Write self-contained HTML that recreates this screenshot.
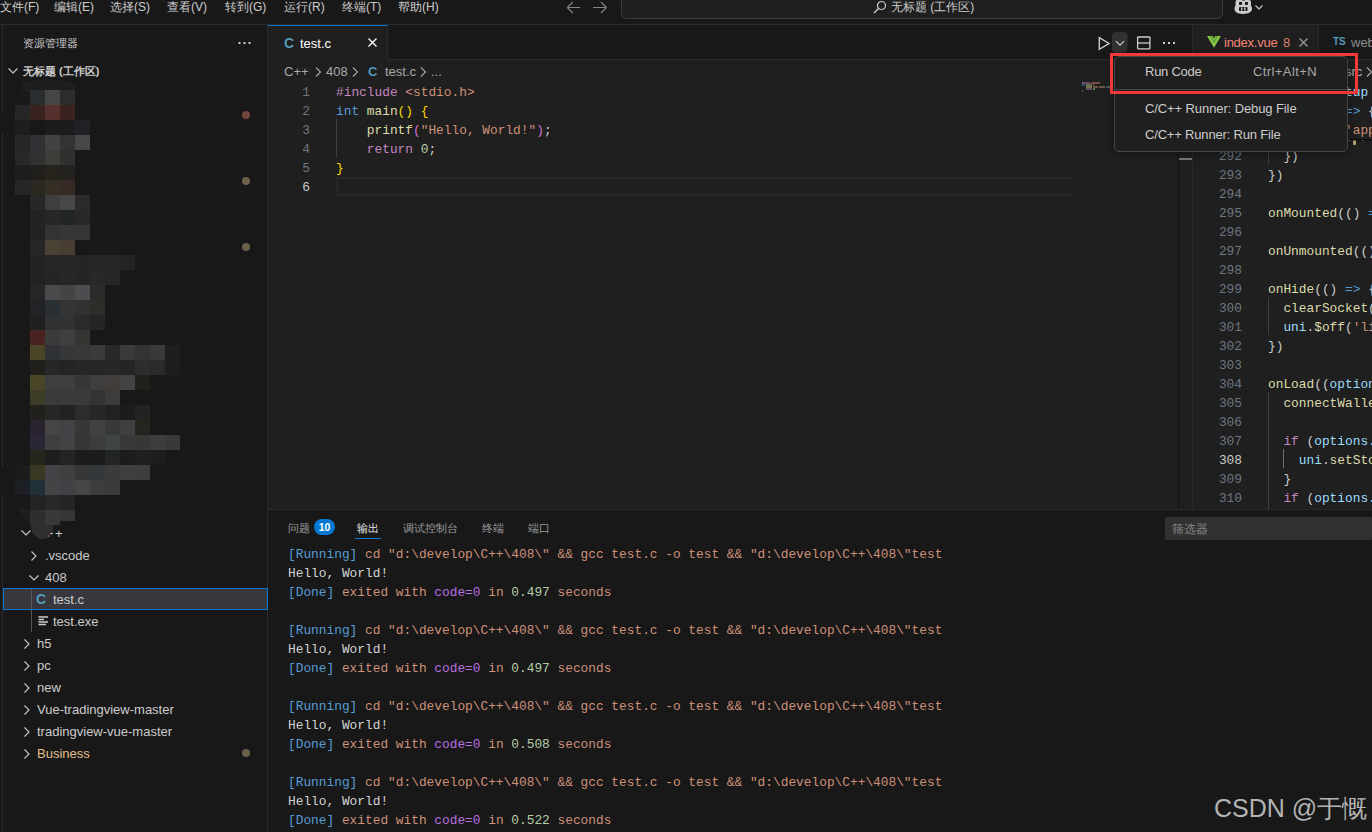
<!DOCTYPE html>
<html><head><meta charset="utf-8">
<style>
*{margin:0;padding:0;box-sizing:border-box}
html,body{width:1372px;height:832px;overflow:hidden;background:#181818}
body{position:relative;font-family:"Liberation Sans",sans-serif;color:#cccccc;font-size:13px}
.a{position:absolute;white-space:pre}
.m{font-family:"Liberation Mono",monospace;font-size:12.83px;line-height:19px}
.ui{font-size:12px;line-height:15px}
.tr{font-size:13px;line-height:22px}
.kw{color:#c586c0}.pu{color:#b670e0}.st{color:#ce9178}.ty{color:#569cd6}.fn{color:#dcdcaa}.b1{color:#ffd700}.b2{color:#da70d6}.nu{color:#b5cea8}.va{color:#9cdcfe}.pl{color:#cccccc}
.ln{color:#6e7681;text-align:right}
svg{position:absolute;overflow:visible}
</style></head><body>

<!-- ===== title bar ===== -->
<div class="a" style="left:0;top:0;width:1372px;height:25px;background:#181818;border-bottom:1px solid #2b2b2b"></div>
<div class="a ui" style="left:0;top:0">文件(F)</div>
<div class="a ui" style="left:54px;top:0">编辑(E)</div>
<div class="a ui" style="left:110px;top:0">选择(S)</div>
<div class="a ui" style="left:167px;top:0">查看(V)</div>
<div class="a ui" style="left:225px;top:0">转到(G)</div>
<div class="a ui" style="left:284px;top:0">运行(R)</div>
<div class="a ui" style="left:342px;top:0">终端(T)</div>
<div class="a ui" style="left:398px;top:0">帮助(H)</div>
<svg style="left:566px;top:0" width="44" height="16" viewBox="0 0 44 16">
 <path d="M1.3 7.5h13M1.3 7.5l5.5-5.5M1.3 7.5l5.5 5.5" stroke="#858585" stroke-width="1.1" fill="none"/>
 <path d="M40.5 7.5h-13.5M40.5 7.5l-5.5-5.5M40.5 7.5l-5.5 5.5" stroke="#858585" stroke-width="1.1" fill="none"/>
</svg>
<div class="a" style="left:621px;top:-12px;width:602px;height:31px;border:1px solid #3c3c3c;border-radius:6px;background:#1f1f1f"></div>
<svg style="left:872px;top:0" width="16" height="16" viewBox="0 0 16 16">
 <circle cx="9.5" cy="5.5" r="4" stroke="#cccccc" stroke-width="1.2" fill="none"/>
 <path d="M6.7 8.3L2 13" stroke="#cccccc" stroke-width="1.3"/>
</svg>
<div class="a ui" style="left:891px;top:0">无标题 (工作区)</div>
<svg style="left:1234px;top:0" width="32" height="16" viewBox="0 0 32 16">
 <path d="M3 0h12a2 2 0 0 1 2 2v3.5c0.6 0.8 1 2 1 3.3 0 3.3-3.5 5.2-9 5.2S0.5 12.1 0.5 8.8c0-1.3 0.4-2.5 1-3.3V2a2 2 0 0 1 1.5-2z" fill="#cccccc"/>
 <rect x="5" y="2" width="3" height="2.8" fill="#181818"/><rect x="11" y="2" width="3" height="2.8" fill="#181818"/><path d="M8 -1h3v1.5h-3z" fill="#181818"/>
 <rect x="5" y="7" width="8.5" height="4" rx="1" fill="#181818"/>
 <rect x="7" y="7.4" width="1.4" height="3.2" fill="#cccccc"/><rect x="10.1" y="7.4" width="1.4" height="3.2" fill="#cccccc"/>
 <path d="M21.5 5.5l3.5 3.5 3.5-3.5" stroke="#cccccc" stroke-width="1.1" fill="none"/>
</svg>

<!-- ===== sidebar ===== -->
<div class="a" style="left:0;top:25px;width:268px;height:807px;background:#181818;border-right:1px solid #2b2b2b"></div>
<div class="a" style="left:2px;top:25px;width:1px;height:86px;background:#2b2b2b"></div><div class="a" style="left:2px;top:133px;width:1px;height:334px;background:#2b2b2b"></div><div class="a" style="left:2px;top:494px;width:1px;height:338px;background:#2b2b2b"></div>
<div class="a" style="left:23px;top:35px;font-size:11px;line-height:16px">资源管理器</div>
<svg style="left:238px;top:42px" width="14" height="3" viewBox="0 0 14 3"><rect x="0.5" y="0" width="2" height="2" fill="#cccccc"/><rect x="5.5" y="0" width="2" height="2" fill="#cccccc"/><rect x="10.5" y="0" width="2" height="2" fill="#cccccc"/></svg>
<svg style="left:7px;top:66px" width="12" height="10" viewBox="0 0 12 10"><path d="M1.5 2.5l4.5 4.5 4.5-4.5" stroke="#cccccc" stroke-width="1.1" fill="none"/></svg>
<div class="a" style="left:23px;top:63px;font-size:11px;line-height:16px;font-weight:bold">无标题 (工作区)</div>
<svg style="left:0;top:0" width="268" height="832">
 <path d="M22 84 Q30 78 60 80 L75 84 L75 90 L22 92z" fill="#1e1e1e"/>
 <rect x="53" y="510" width="22" height="11" fill="#353535"/>
 <path d="M31 525 L53 525 L53 534 Q50 539 40 539 Q34 536 32 532z" fill="#2f2f31"/>
 <path d="M20 506 L30 510 L30 525 Q24 518 20 512z" fill="#1e1e1e"/>
 <rect x="30" y="90" width="15" height="15" fill="#2a2d30"/><rect x="45" y="90" width="15" height="15" fill="#464644"/><rect x="60" y="90" width="15" height="15" fill="#2c2c2a"/><rect x="15" y="105" width="15" height="15" fill="#262626"/><rect x="30" y="105" width="15" height="15" fill="#3a2220"/><rect x="45" y="105" width="15" height="15" fill="#55302c"/><rect x="60" y="105" width="15" height="15" fill="#3a2220"/><rect x="15" y="120" width="15" height="15" fill="#1e1e1e"/><rect x="30" y="120" width="15" height="15" fill="#181818"/><rect x="45" y="120" width="15" height="15" fill="#1c1c1c"/><rect x="60" y="120" width="15" height="15" fill="#1c1c1c"/><rect x="75" y="120" width="15" height="15" fill="#1f2124"/><rect x="15" y="135" width="15" height="15" fill="#262626"/><rect x="30" y="135" width="15" height="15" fill="#2f3134"/><rect x="45" y="135" width="15" height="15" fill="#434240"/><rect x="60" y="135" width="15" height="15" fill="#333333"/><rect x="75" y="135" width="15" height="15" fill="#47474a"/><rect x="15" y="150" width="15" height="15" fill="#282828"/><rect x="30" y="150" width="15" height="15" fill="#313131"/><rect x="45" y="150" width="15" height="15" fill="#3c3d38"/><rect x="60" y="150" width="15" height="15" fill="#30302e"/><rect x="15" y="165" width="15" height="15" fill="#1d1d1d"/><rect x="30" y="165" width="15" height="15" fill="#201f1c"/><rect x="45" y="165" width="15" height="15" fill="#26231d"/><rect x="60" y="165" width="15" height="15" fill="#24221e"/><rect x="15" y="180" width="15" height="15" fill="#262626"/><rect x="30" y="180" width="15" height="15" fill="#2b2822"/><rect x="45" y="180" width="15" height="15" fill="#352e25"/><rect x="60" y="180" width="15" height="15" fill="#352a25"/><rect x="30" y="195" width="15" height="15" fill="#272727"/><rect x="45" y="195" width="15" height="15" fill="#3e3e3d"/><rect x="60" y="195" width="15" height="15" fill="#474747"/><rect x="75" y="195" width="15" height="15" fill="#2b2a28"/><rect x="30" y="210" width="15" height="15" fill="#222222"/><rect x="45" y="210" width="15" height="15" fill="#252625"/><rect x="60" y="210" width="15" height="15" fill="#222526"/><rect x="75" y="210" width="15" height="15" fill="#292727"/><rect x="30" y="225" width="15" height="15" fill="#222222"/><rect x="45" y="225" width="15" height="15" fill="#333333"/><rect x="60" y="225" width="15" height="15" fill="#363636"/><rect x="75" y="225" width="15" height="15" fill="#353535"/><rect x="30" y="240" width="15" height="15" fill="#262626"/><rect x="45" y="240" width="15" height="15" fill="#4a4334"/><rect x="60" y="240" width="15" height="15" fill="#473d30"/><rect x="30" y="255" width="15" height="15" fill="#222222"/><rect x="45" y="255" width="15" height="15" fill="#262626"/><rect x="60" y="255" width="15" height="15" fill="#262626"/><rect x="75" y="255" width="15" height="15" fill="#232526"/><rect x="90" y="255" width="15" height="15" fill="#252628"/><rect x="105" y="255" width="15" height="15" fill="#262626"/><rect x="120" y="255" width="15" height="15" fill="#242424"/><rect x="30" y="270" width="15" height="15" fill="#222222"/><rect x="45" y="270" width="15" height="15" fill="#252525"/><rect x="60" y="270" width="15" height="15" fill="#262826"/><rect x="75" y="270" width="15" height="15" fill="#252525"/><rect x="90" y="270" width="15" height="15" fill="#282828"/><rect x="105" y="270" width="15" height="15" fill="#262626"/><rect x="30" y="285" width="15" height="15" fill="#262626"/><rect x="45" y="285" width="15" height="15" fill="#4a4a4c"/><rect x="60" y="285" width="15" height="15" fill="#444442"/><rect x="75" y="285" width="15" height="15" fill="#4d4c50"/><rect x="90" y="285" width="15" height="15" fill="#2c2b29"/><rect x="30" y="300" width="15" height="15" fill="#212326"/><rect x="45" y="300" width="15" height="15" fill="#2a2f33"/><rect x="60" y="300" width="15" height="15" fill="#353434"/><rect x="75" y="300" width="15" height="15" fill="#333232"/><rect x="90" y="300" width="15" height="15" fill="#2d2c29"/><rect x="30" y="315" width="15" height="15" fill="#1e2120"/><rect x="45" y="315" width="15" height="15" fill="#2f3133"/><rect x="60" y="315" width="15" height="15" fill="#313233"/><rect x="75" y="315" width="15" height="15" fill="#2b2b29"/><rect x="90" y="315" width="15" height="15" fill="#262425"/><rect x="30" y="330" width="15" height="15" fill="#4a2222"/><rect x="45" y="330" width="15" height="15" fill="#3b3b3a"/><rect x="60" y="330" width="15" height="15" fill="#403f42"/><rect x="75" y="330" width="15" height="15" fill="#353431"/><rect x="30" y="345" width="15" height="15" fill="#4a4527"/><rect x="45" y="345" width="15" height="15" fill="#303335"/><rect x="60" y="345" width="15" height="15" fill="#353738"/><rect x="75" y="345" width="15" height="15" fill="#383838"/><rect x="90" y="345" width="15" height="15" fill="#3b3b3b"/><rect x="105" y="345" width="15" height="15" fill="#292927"/><rect x="120" y="345" width="15" height="15" fill="#3a393b"/><rect x="135" y="345" width="15" height="15" fill="#313335"/><rect x="150" y="345" width="15" height="15" fill="#3a3937"/><rect x="165" y="345" width="15" height="15" fill="#1e1f1d"/><rect x="30" y="360" width="15" height="15" fill="#211f1b"/><rect x="45" y="360" width="15" height="15" fill="#272727"/><rect x="60" y="360" width="15" height="15" fill="#232524"/><rect x="75" y="360" width="15" height="15" fill="#262626"/><rect x="90" y="360" width="15" height="15" fill="#262626"/><rect x="105" y="360" width="15" height="15" fill="#272727"/><rect x="120" y="360" width="15" height="15" fill="#252525"/><rect x="135" y="360" width="15" height="15" fill="#2b2e2d"/><rect x="150" y="360" width="15" height="15" fill="#2a2a2a"/><rect x="165" y="360" width="15" height="15" fill="#1d1d1d"/><rect x="30" y="375" width="15" height="15" fill="#4a4628"/><rect x="45" y="375" width="15" height="15" fill="#3e3e3e"/><rect x="60" y="375" width="15" height="15" fill="#3d3f3e"/><rect x="75" y="375" width="15" height="15" fill="#373538"/><rect x="90" y="375" width="15" height="15" fill="#3e3e3e"/><rect x="105" y="375" width="15" height="15" fill="#403d3b"/><rect x="120" y="375" width="15" height="15" fill="#434245"/><rect x="135" y="375" width="15" height="15" fill="#22201d"/><rect x="30" y="390" width="15" height="15" fill="#3d3c26"/><rect x="45" y="390" width="15" height="15" fill="#393a3b"/><rect x="60" y="390" width="15" height="15" fill="#3b3b39"/><rect x="75" y="390" width="15" height="15" fill="#3a3a3a"/><rect x="90" y="390" width="15" height="15" fill="#333333"/><rect x="105" y="390" width="15" height="15" fill="#3e3b3c"/><rect x="30" y="405" width="15" height="15" fill="#22201d"/><rect x="45" y="405" width="15" height="15" fill="#272727"/><rect x="60" y="405" width="15" height="15" fill="#222222"/><rect x="75" y="405" width="15" height="15" fill="#2c2c2c"/><rect x="90" y="405" width="15" height="15" fill="#272727"/><rect x="105" y="405" width="15" height="15" fill="#222222"/><rect x="120" y="405" width="15" height="15" fill="#1c1c1c"/><rect x="135" y="405" width="15" height="15" fill="#222222"/><rect x="30" y="420" width="15" height="15" fill="#28232e"/><rect x="45" y="420" width="15" height="15" fill="#454545"/><rect x="60" y="420" width="15" height="15" fill="#434246"/><rect x="75" y="420" width="15" height="15" fill="#373738"/><rect x="90" y="420" width="15" height="15" fill="#414141"/><rect x="105" y="420" width="15" height="15" fill="#393939"/><rect x="120" y="420" width="15" height="15" fill="#403e3f"/><rect x="135" y="420" width="15" height="15" fill="#252520"/><rect x="30" y="435" width="15" height="15" fill="#2a2633"/><rect x="45" y="435" width="15" height="15" fill="#3f3e41"/><rect x="60" y="435" width="15" height="15" fill="#434245"/><rect x="75" y="435" width="15" height="15" fill="#363636"/><rect x="90" y="435" width="15" height="15" fill="#3d3c3a"/><rect x="105" y="435" width="15" height="15" fill="#3f4444"/><rect x="120" y="435" width="15" height="15" fill="#393937"/><rect x="135" y="435" width="15" height="15" fill="#373737"/><rect x="150" y="435" width="15" height="15" fill="#3e3d3b"/><rect x="165" y="435" width="15" height="15" fill="#383838"/><rect x="30" y="450" width="15" height="15" fill="#27261d"/><rect x="45" y="450" width="15" height="15" fill="#1e1e1e"/><rect x="60" y="450" width="15" height="15" fill="#222524"/><rect x="75" y="450" width="15" height="15" fill="#1c1c1c"/><rect x="90" y="450" width="15" height="15" fill="#1c1c1c"/><rect x="105" y="450" width="15" height="15" fill="#222524"/><rect x="120" y="450" width="15" height="15" fill="#1c1c1c"/><rect x="135" y="450" width="15" height="15" fill="#1f1f1f"/><rect x="150" y="450" width="15" height="15" fill="#1e1d1b"/><rect x="15" y="465" width="15" height="15" fill="#1c1c1c"/><rect x="30" y="465" width="15" height="15" fill="#3a3822"/><rect x="45" y="465" width="15" height="15" fill="#434246"/><rect x="60" y="465" width="15" height="15" fill="#3e3f3f"/><rect x="75" y="465" width="15" height="15" fill="#373634"/><rect x="90" y="465" width="15" height="15" fill="#33383b"/><rect x="105" y="465" width="15" height="15" fill="#3c3b39"/><rect x="120" y="465" width="15" height="15" fill="#3f3d3e"/><rect x="135" y="465" width="15" height="15" fill="#3e3c3d"/><rect x="15" y="480" width="15" height="15" fill="#1c2025"/><rect x="30" y="480" width="15" height="15" fill="#1f3039"/><rect x="45" y="480" width="15" height="15" fill="#444346"/><rect x="60" y="480" width="15" height="15" fill="#424145"/><rect x="75" y="480" width="15" height="15" fill="#464646"/><rect x="90" y="480" width="15" height="15" fill="#3e3d3b"/><rect x="105" y="480" width="15" height="15" fill="#3a3b3d"/><rect x="30" y="495" width="15" height="15" fill="#222323"/><rect x="45" y="495" width="15" height="15" fill="#282826"/><rect x="60" y="495" width="15" height="15" fill="#242424"/><rect x="30" y="510" width="15" height="15" fill="#2e2e30"/><rect x="45" y="510" width="15" height="15" fill="#393938"/>

 <circle cx="246" cy="115" r="4" fill="#74453d"/>
 <circle cx="246" cy="181" r="4" fill="#6c604b"/>
 <circle cx="246" cy="247" r="4" fill="#6c604b"/>
 <circle cx="246" cy="753" r="4" fill="#6c604b"/>
</svg>
<!-- tree -->
<svg style="left:20px;top:528px" width="12" height="10" viewBox="0 0 12 10"><path d="M1.5 2.5l4.5 4.5 4.5-4.5" stroke="#cccccc" stroke-width="1.1" fill="none"/></svg>
<div class="a tr" style="left:55px;top:523px">+</div>
<div class="a" style="left:50px;top:533px;width:3px;height:1px;background:#b0b0b0"></div><div class="a" style="left:48px;top:535px;width:1px;height:2px;background:#9a4a4a"></div>
<svg style="left:29px;top:550px" width="10" height="12" viewBox="0 0 10 12"><path d="M2.5 1.5l4.5 4.5-4.5 4.5" stroke="#cccccc" stroke-width="1.1" fill="none"/></svg>
<div class="a tr" style="left:45px;top:545px">.vscode</div>
<svg style="left:28px;top:573px" width="12" height="10" viewBox="0 0 12 10"><path d="M1.5 2.5l4.5 4.5 4.5-4.5" stroke="#cccccc" stroke-width="1.1" fill="none"/></svg>
<div class="a tr" style="left:45px;top:567px">408</div>
<div class="a" style="left:3px;top:588px;width:265px;height:22px;background:#37373d;border:1px solid #0078d4"></div>
<div class="a" style="left:31px;top:610px;width:1px;height:22px;background:#585858"></div>
<div class="a" style="left:31px;top:589px;width:1px;height:20px;background:#585858"></div>
<div class="a" style="left:36px;top:588px;font-size:14px;line-height:22px;font-weight:bold;color:#519aba">C</div>
<div class="a tr" style="left:53px;top:589px">test.c</div>
<svg style="left:38px;top:615px" width="12" height="12" viewBox="0 0 12 12"><path d="M0.5 2h9.5M0.5 4.5h5.5M0.5 7h9.5M0.5 9.5h7.5" stroke="#cccccc" stroke-width="1.5"/></svg>
<div class="a tr" style="left:53px;top:611px">test.exe</div>
<svg style="left:22px;top:638px" width="10" height="12" viewBox="0 0 10 12"><path d="M2.5 1.5l4.5 4.5-4.5 4.5" stroke="#cccccc" stroke-width="1.1" fill="none"/></svg>
<div class="a tr" style="left:37px;top:633px">h5</div>
<svg style="left:22px;top:660px" width="10" height="12" viewBox="0 0 10 12"><path d="M2.5 1.5l4.5 4.5-4.5 4.5" stroke="#cccccc" stroke-width="1.1" fill="none"/></svg>
<div class="a tr" style="left:37px;top:655px">pc</div>
<svg style="left:22px;top:682px" width="10" height="12" viewBox="0 0 10 12"><path d="M2.5 1.5l4.5 4.5-4.5 4.5" stroke="#cccccc" stroke-width="1.1" fill="none"/></svg>
<div class="a tr" style="left:37px;top:677px">new</div>
<svg style="left:22px;top:704px" width="10" height="12" viewBox="0 0 10 12"><path d="M2.5 1.5l4.5 4.5-4.5 4.5" stroke="#cccccc" stroke-width="1.1" fill="none"/></svg>
<div class="a tr" style="left:37px;top:699px">Vue-tradingview-master</div>
<svg style="left:22px;top:726px" width="10" height="12" viewBox="0 0 10 12"><path d="M2.5 1.5l4.5 4.5-4.5 4.5" stroke="#cccccc" stroke-width="1.1" fill="none"/></svg>
<div class="a tr" style="left:37px;top:721px">tradingview-vue-master</div>
<svg style="left:22px;top:748px" width="10" height="12" viewBox="0 0 10 12"><path d="M2.5 1.5l4.5 4.5-4.5 4.5" stroke="#cccccc" stroke-width="1.1" fill="none"/></svg>
<div class="a tr" style="left:37px;top:743px;color:#e2c08d">Business</div>

<!-- ===== editor group 1 ===== -->
<div class="a" style="left:268px;top:25px;width:925px;height:35px;background:#181818;border-bottom:1px solid #2b2b2b"></div>
<div class="a" style="left:268px;top:25px;width:120px;height:35px;background:#1f1f1f;border-top:1px solid #0078d4;border-right:1px solid #2b2b2b"></div>
<div class="a" style="left:284px;top:34px;font-size:14px;line-height:18px;font-weight:bold;color:#519aba">C</div>
<div class="a" style="left:300px;top:35px;font-size:13px;line-height:18px;color:#ffffff">test.c</div>
<svg style="left:366px;top:36px" width="14" height="14" viewBox="0 0 14 14"><path d="M2.5 2.5l8 8M10.5 2.5l-8 8" stroke="#ffffff" stroke-width="1.3"/></svg>
<!-- actions -->
<svg style="left:1096px;top:34px" width="84" height="20" viewBox="0 0 84 20">
 <path d="M3.3 3.7 L13 9.5 L3.3 15.3z" stroke="#cccccc" stroke-width="1.4" fill="none" stroke-linejoin="miter"/>
 <rect x="16" y="-2" width="15.5" height="20.5" rx="4" fill="#313131"/>
 <path d="M20 7.2l4 4 4-4" stroke="#cccccc" stroke-width="1.2" fill="none"/>
 <rect x="41.6" y="3" width="12.3" height="11.8" rx="0.5" stroke="#cccccc" stroke-width="1.3" fill="none"/>
 <path d="M41.5 9h12.5" stroke="#cccccc" stroke-width="1.3"/>
 <rect x="67" y="8" width="2" height="2" fill="#cccccc"/><rect x="72" y="8" width="2" height="2" fill="#cccccc"/><rect x="77" y="8" width="2" height="2" fill="#cccccc"/>
</svg>
<div class="a" style="left:268px;top:60px;width:925px;height:449px;background:#1f1f1f"></div>
<!-- breadcrumbs -->
<div class="a" style="left:284px;top:63px;font-size:13px;line-height:17px;color:#a9a9a9">C++</div>
<svg style="left:314px;top:66px" width="8" height="12" viewBox="0 0 8 12"><path d="M2 1.5l4.5 4.5-4.5 4.5" stroke="#a9a9a9" stroke-width="1.1" fill="none"/></svg>
<div class="a" style="left:326px;top:63px;font-size:13px;line-height:17px;color:#a9a9a9">408</div>
<svg style="left:351px;top:66px" width="8" height="12" viewBox="0 0 8 12"><path d="M2 1.5l4.5 4.5-4.5 4.5" stroke="#a9a9a9" stroke-width="1.1" fill="none"/></svg>
<div class="a" style="left:368px;top:63px;font-size:13px;line-height:17px;font-weight:bold;color:#519aba">C</div>
<div class="a" style="left:385px;top:63px;font-size:13px;line-height:17px;color:#a9a9a9">test.c</div>
<svg style="left:419px;top:66px" width="8" height="12" viewBox="0 0 8 12"><path d="M2 1.5l4.5 4.5-4.5 4.5" stroke="#a9a9a9" stroke-width="1.1" fill="none"/></svg>
<div class="a" style="left:431px;top:63px;font-size:13px;line-height:17px;color:#a9a9a9">...</div>
<!-- current line -->
<div class="a" style="left:336px;top:177px;width:738px;height:19px;border:2px solid #282828;border-right:0"></div>
<!-- line numbers -->
<div class="a m ln" style="left:280px;top:83px;width:30px">1
2
3
4
5
<span style="color:#cccccc">6</span></div>
<div class="a" style="left:336px;top:119px;width:1px;height:38px;background:#404040"></div>
<div class="a m" style="left:336px;top:83px"><span class="kw">#include</span> <span class="st">&lt;stdio.h&gt;</span>
<span class="ty">int</span> <span class="fn">main</span><span class="b1">()</span> <span class="b1">{</span>
    <span class="fn">printf</span><span class="b2">(</span><span class="st">"Hello, World!"</span><span class="b2">)</span>;
    <span class="kw">return</span> <span class="nu">0</span>;
<span class="b1">}</span>
</div>
<!-- minimap -->
<svg style="left:0;top:0" width="1372" height="832" shape-rendering="crispEdges">
 <g opacity="0.75">
 <rect x="1082" y="82" width="1" height="2" fill="#a070a8"/><rect x="1083" y="82" width="7" height="1.6" fill="#7d5a80"/><rect x="1091" y="82" width="7" height="1.6" fill="#8c6450"/><rect x="1098" y="82" width="2" height="1.6" fill="#7a5a48"/>
 <rect x="1082" y="84" width="3" height="1.8" fill="#3d6590"/><rect x="1086" y="84.2" width="4" height="1.6" fill="#8c8c6a"/><rect x="1090" y="84.2" width="2" height="1.6" fill="#8c7d3a"/><rect x="1093" y="84.2" width="1" height="1.6" fill="#707070"/>
 <rect x="1086" y="86" width="6" height="1.6" fill="#8c8c6a"/><rect x="1093" y="86" width="5" height="1.6" fill="#8c6450"/><rect x="1099" y="86" width="6" height="1.6" fill="#8c6450"/><rect x="1106" y="86" width="4" height="1.6" fill="#5a6a70"/>
 <rect x="1086" y="88" width="6" height="1.6" fill="#7d5a80"/><rect x="1093" y="88" width="2" height="1.6" fill="#7a9070"/>
 <rect x="1082" y="90" width="1" height="2" fill="#808080"/>
 </g>
</svg>
<div class="a" style="left:1178px;top:60px;width:1px;height:449px;background:#141414"></div>
<div class="a" style="left:1179px;top:158px;width:13px;height:2px;background:#7a7a7a"></div>

<!-- ===== editor group 2 ===== -->
<div class="a" style="left:1192px;top:25px;width:1px;height:484px;background:#2b2b2b"></div>
<div class="a" style="left:1193px;top:25px;width:179px;height:35px;background:#181818;border-bottom:1px solid #2b2b2b"></div>
<div class="a" style="left:1193px;top:25px;width:126px;height:35px;background:#1f1f1f;border-right:1px solid #2b2b2b"></div>
<svg style="left:1207px;top:36px" width="14" height="12" viewBox="0 0 14 12"><path d="M0 0H14L7 11.7z" fill="#86c540"/><path d="M3.7 0.2L7 6.1 10.3 0.2" stroke="#4f9a35" stroke-width="1.1" fill="none"/><path d="M5.4 0H8.6L7 2.6z" fill="#2a3a22"/></svg>
<div class="a" style="left:1224px;top:34px;font-size:13px;line-height:18px;color:#f48771;letter-spacing:-0.25px">index.vue</div>
<div class="a" style="left:1283px;top:34px;font-size:13px;line-height:18px;color:#d9806e">8</div>
<svg style="left:1297px;top:36px" width="14" height="14" viewBox="0 0 14 14"><path d="M2.5 2.5l8 8M10.5 2.5l-8 8" stroke="#9d9d9d" stroke-width="1.2"/></svg>
<div class="a" style="left:1333px;top:35px;font-size:10px;line-height:14px;font-weight:bold;color:#519aba">TS</div>
<div class="a" style="left:1351px;top:34px;font-size:13px;line-height:18px;color:#8b8b8b">web</div>
<div class="a" style="left:1193px;top:60px;width:179px;height:449px;background:#1f1f1f"></div>
<!-- breadcrumbs 2 -->
<div class="a" style="left:1345px;top:63px;font-size:13px;line-height:17px;color:#a9a9a9">src</div>
<svg style="left:1365px;top:66px" width="8" height="12" viewBox="0 0 8 12"><path d="M2 1.5l4.5 4.5-4.5 4.5" stroke="#a9a9a9" stroke-width="1.1" fill="none"/></svg>
<!-- sticky -->
<div class="a" style="left:1272px;top:139px;width:100px;height:7px;overflow:hidden"><div class="a" style="left:76px;top:1px;width:3px;height:1px;background:#8a7050"></div><div class="a" style="left:81px;top:1px;width:3px;height:5px;background:#b8a870;border-radius:1px"></div><div class="a" style="left:90px;top:1px;width:2px;height:1px;background:#707070"></div></div>
<div class="a" style="left:1193px;top:81px;width:179px;height:58px;background:#1f1f1f;box-shadow:0 1px 2px #050505"></div>
<div class="a m" style="left:1345px;top:83px"><span class="va">tup</span>
<span class="ty">=&gt;</span> <span class="pl">{</span>
<span class="st">'app</span></div>
<!-- code 2 -->
<div class="a m ln" style="left:1205px;top:147px;width:37px">292
293
294
295
296
297
298
299
300
301
302
303
304
305
306
307
<span style="color:#cccccc">308</span>
309
310</div>
<div class="a" style="left:1268px;top:145px;width:1px;height:19px;background:#404040"></div>
<div class="a" style="left:1268px;top:297px;width:1px;height:38px;background:#404040"></div>
<div class="a" style="left:1268px;top:392px;width:1px;height:117px;background:#404040"></div>
<div class="a" style="left:1283px;top:449px;width:1px;height:19px;background:#707070"></div>
<div class="a m" style="left:1268px;top:147px">  <span class="pl">}</span><span class="pl">)</span>
<span class="pl">})</span>

<span class="fn">onMounted</span><span class="pl">(</span><span class="pl">()</span> <span class="ty">=</span>

<span class="fn">onUnmounted</span><span class="pl">(</span><span class="pl">()</span>

<span class="fn">onHide</span><span class="pl">(</span><span class="pl">()</span> <span class="ty">=&gt;</span> <span class="pl">{</span>
  <span class="fn">clearSocket</span><span class="pl">(</span>
  <span class="va">uni</span>.<span class="fn">$off</span><span class="pl">(</span><span class="st">'li</span>
<span class="pl">})</span>

<span class="fn">onLoad</span><span class="pl">(</span><span class="pl">(</span><span class="va">option</span>
  <span class="fn">connectWalle</span>

  <span class="kw">if</span> <span class="pl">(</span><span class="va">options.</span>
    <span class="va">uni</span>.<span class="fn">setSto</span>
  <span class="pl">}</span>
  <span class="kw">if</span> <span class="pl">(</span><span class="va">options.</span></div>

<!-- ===== menu ===== -->
<div class="a" style="left:1114px;top:56px;width:234px;height:96px;background:#1f1f1f;border:1px solid #454545;border-radius:5px;box-shadow:0 2px 8px rgba(0,0,0,0.4)"></div>
<div class="a" style="left:1115px;top:89px;width:232px;height:1px;background:#454545"></div>
<div class="a" style="left:1145px;top:63px;font-size:13px;line-height:17px;color:#cccccc;letter-spacing:-0.25px">Run Code</div>
<div class="a" style="left:1253px;top:63px;font-size:13px;line-height:17px;color:#a9a9a9;letter-spacing:0.4px">Ctrl+Alt+N</div>
<div class="a" style="left:1145px;top:100px;font-size:13px;line-height:17px;color:#cccccc;letter-spacing:-0.1px">C/C++ Runner: Debug File</div>
<div class="a" style="left:1145px;top:126px;font-size:13px;line-height:17px;color:#cccccc;letter-spacing:-0.18px">C/C++ Runner: Run File</div>
<div class="a" style="left:1110px;top:53px;width:248px;height:41px;border:3px solid #f03a3a"></div>

<!-- ===== panel ===== -->
<div class="a" style="left:268px;top:509px;width:1104px;height:323px;background:#181818;border-top:1px solid #2b2b2b"></div>
<div class="a" style="left:288px;top:520px;font-size:11px;line-height:16px;color:#9d9d9d">问题</div>
<div class="a" style="left:314px;top:519px;width:21px;height:16px;border-radius:8px;background:#0078d4;color:#ffffff;font-size:10.5px;line-height:16.5px;font-weight:bold;text-align:center">10</div>
<div class="a" style="left:357px;top:520px;font-size:11px;line-height:16px;color:#e7e7e7">输出</div>
<div class="a" style="left:355px;top:538px;width:26px;height:1px;background:#0078d4"></div>
<div class="a" style="left:403px;top:520px;font-size:11px;line-height:16px;color:#9d9d9d">调试控制台</div>
<div class="a" style="left:482px;top:520px;font-size:11px;line-height:16px;color:#9d9d9d">终端</div>
<div class="a" style="left:528px;top:520px;font-size:11px;line-height:16px;color:#9d9d9d">端口</div>
<div class="a" style="left:1165px;top:517px;width:207px;height:23px;background:#313131;border-radius:2px"></div>
<div class="a" style="left:1172px;top:521px;font-size:12px;line-height:16px;color:#8b8b8b">筛选器</div>
<div class="a m" style="left:288px;top:545px"><span class="ty">[Running]</span> <span class="st">cd "d:\develop\C++\408\" &amp;&amp; gcc test.c -o test &amp;&amp; "d:\develop\C++\408\"test</span>
<span style="color:#d4d4d4">Hello, World!</span>
<span class="ty">[Done]</span> <span class="st">exited with </span><span class="pu">code=0</span><span class="st"> in </span><span class="nu">0.497</span><span class="st"> seconds</span>

<span class="ty">[Running]</span> <span class="st">cd "d:\develop\C++\408\" &amp;&amp; gcc test.c -o test &amp;&amp; "d:\develop\C++\408\"test</span>
<span style="color:#d4d4d4">Hello, World!</span>
<span class="ty">[Done]</span> <span class="st">exited with </span><span class="pu">code=0</span><span class="st"> in </span><span class="nu">0.497</span><span class="st"> seconds</span>

<span class="ty">[Running]</span> <span class="st">cd "d:\develop\C++\408\" &amp;&amp; gcc test.c -o test &amp;&amp; "d:\develop\C++\408\"test</span>
<span style="color:#d4d4d4">Hello, World!</span>
<span class="ty">[Done]</span> <span class="st">exited with </span><span class="pu">code=0</span><span class="st"> in </span><span class="nu">0.508</span><span class="st"> seconds</span>

<span class="ty">[Running]</span> <span class="st">cd "d:\develop\C++\408\" &amp;&amp; gcc test.c -o test &amp;&amp; "d:\develop\C++\408\"test</span>
<span style="color:#d4d4d4">Hello, World!</span>
<span class="ty">[Done]</span> <span class="st">exited with </span><span class="pu">code=0</span><span class="st"> in </span><span class="nu">0.522</span><span class="st"> seconds</span></div>

<div class="a" style="left:1214px;top:793px;font-size:25px;line-height:30px;color:#b4b4b4">CSDN @于慨</div>
</body></html>
